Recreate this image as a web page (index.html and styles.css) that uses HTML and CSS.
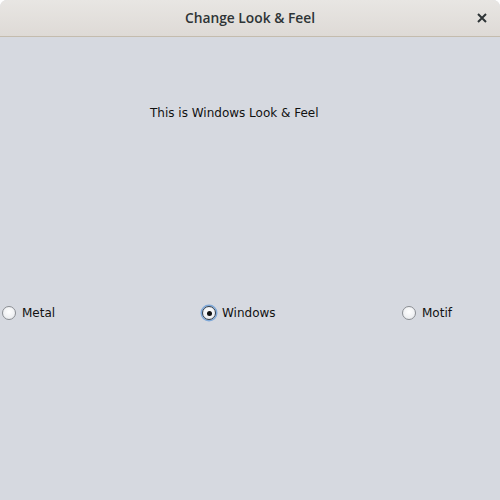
FILE: index.html
```html
<!DOCTYPE html>
<html>
<head>
<meta charset="utf-8">
<link rel="stylesheet" href="styles.css">
</head>
<body>
<div class="window">
  <div class="titlebar">
    <span class="title">Change Look &amp; Feel</span>
    <span class="close">
      <svg width="10" height="10" viewBox="0 0 10 10"><path d="M1 1L9 9M9 1L1 9" stroke="#2e3436" stroke-width="2"/></svg>
    </span>
  </div>
  <div class="content">
    <div class="label-row"><span class="label">This is Windows Look &amp; Feel</span></div>
    <div class="radios">
      <label class="radio"><span class="dot"></span>Metal</label>
      <label class="radio selected"><span class="dot"></span>Windows</label>
      <label class="radio"><span class="dot"></span>Motif</label>
    </div>
  </div>
</div>
</body>
</html>
```
FILE: styles.css
```css
html, body { margin: 0; padding: 0; background: #ffffff; }
.window {
  width: 500px; height: 500px;
  display: flex; flex-direction: column;
  border-radius: 7px 7px 0 0;
  overflow: hidden;
  background: #d6d9e0;
}
.titlebar {
  flex: none;
  background: linear-gradient(#e8e6e3, #dedad6);
  border-bottom: 1px solid #c4bcae;
  display: flex; align-items: center; justify-content: center;
  position: relative;
  box-sizing: border-box;
  height: 37px;
}
.title {
  font-family: "Open Sans", "Noto Sans", sans-serif;
  font-weight: 600;
  font-size: 13.8px;
  color: #2e3436;
  padding-bottom: 1px;
}
.close {
  position: absolute; right: 13px; top: 13px;
  width: 10px; height: 10px; display: block;
}
.close svg { display: block; }
.content {
  flex: 1;
  font-family: "DejaVu Sans", sans-serif;
  font-size: 12px;
  color: #111;
}
.label-row { padding: 68px 0 0 150px; height: 17px; line-height: 17px; }
.radios {
  display: grid;
  grid-template-columns: 200px 200px 100px;
  margin-top: 182px;
}
.radio {
  display: flex; align-items: center;
  height: 18px; line-height: 18px;
  padding-left: 2px;
}
.dot {
  width: 14px; height: 14px; box-sizing: border-box;
  border-radius: 50%;
  border: 1px solid #8a8d92;
  background: radial-gradient(circle at 50% 40%, #ffffff, #e4e6ea);
  margin-right: 6px;
  position: relative;
}
.selected .dot {
  border-color: #2d3a48;
  box-shadow: 0 0 0 1.5px #7fa8d8;
}
.selected .dot::after {
  content: ""; position: absolute;
  left: 3.5px; top: 3.5px; width: 5px; height: 5px; border-radius: 50%;
  background: #111;
}
```
